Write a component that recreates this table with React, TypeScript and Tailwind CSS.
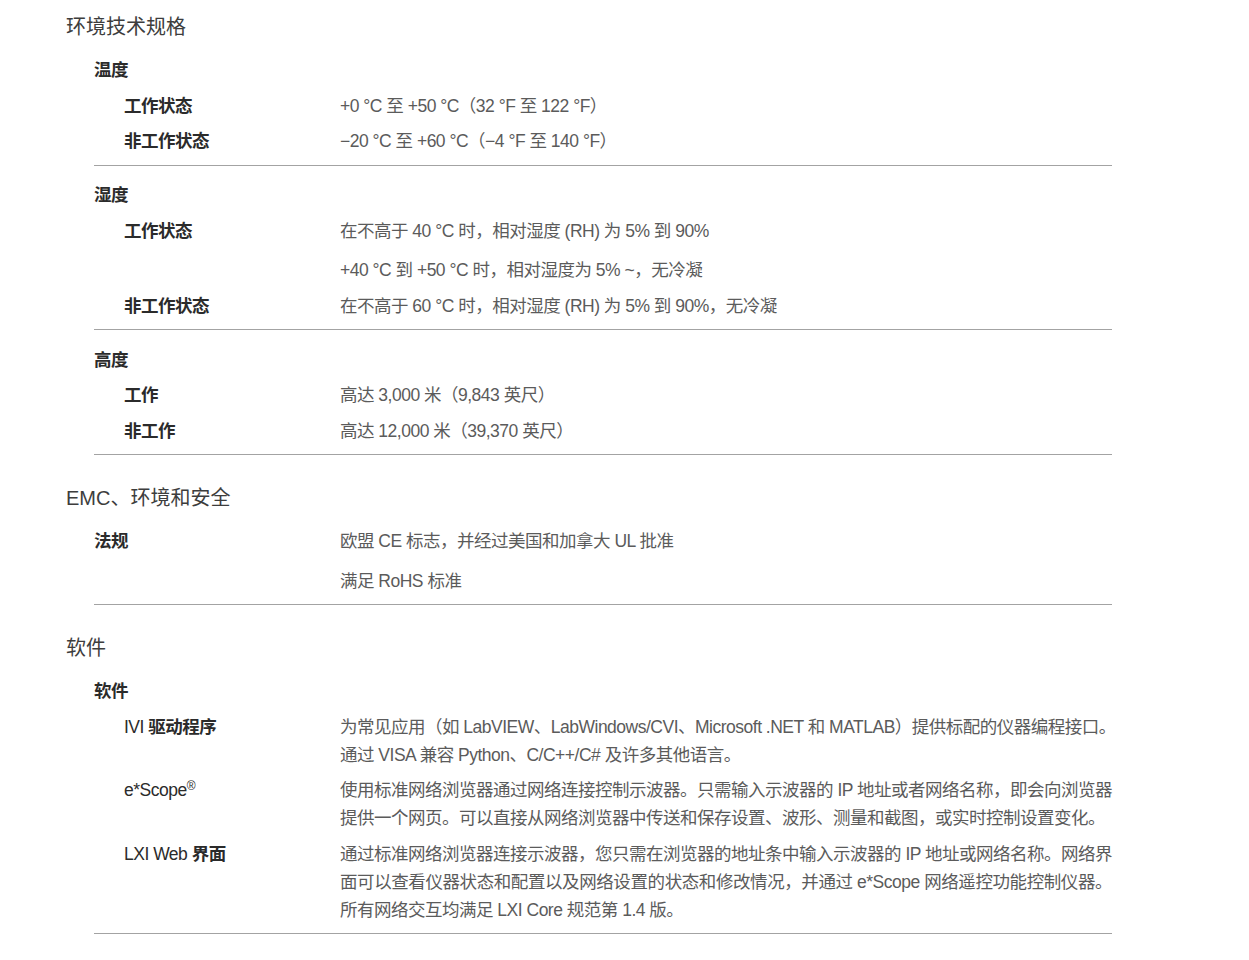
import type { ReactNode } from 'react'

type Row = { label: ReactNode; values: string[][] }
type Group = { name: string; values?: string[][]; rows: Row[] }
type Section = { title: string; groups: Group[] }

const sections: Section[] = [
  {
    title: '环境技术规格',
    groups: [
      {
        name: '温度',
        rows: [
          { label: '工作状态', values: [['+0 °C 至 +50 °C（32 °F 至 122 °F）']] },
          { label: '非工作状态', values: [['−20 °C 至 +60 °C（−4 °F 至 140 °F）']] },
        ],
      },
      {
        name: '湿度',
        rows: [
          {
            label: '工作状态',
            values: [['在不高于 40 °C 时，相对湿度 (RH) 为 5% 到 90%'], ['+40 °C 到 +50 °C 时，相对湿度为 5% ~，无冷凝']],
          },
          { label: '非工作状态', values: [['在不高于 60 °C 时，相对湿度 (RH) 为 5% 到 90%，无冷凝']] },
        ],
      },
      {
        name: '高度',
        rows: [
          { label: '工作', values: [['高达 3,000 米（9,843 英尺）']] },
          { label: '非工作', values: [['高达 12,000 米（39,370 英尺）']] },
        ],
      },
    ],
  },
  {
    title: 'EMC、环境和安全',
    groups: [
      {
        name: '法规',
        values: [['欧盟 CE 标志，并经过美国和加拿大 UL 批准'], ['满足 RoHS 标准']],
        rows: [],
      },
    ],
  },
  {
    title: '软件',
    groups: [
      {
        name: '软件',
        rows: [
          {
            label: (
              <>
                <span className="font-normal">IVI</span> 驱动程序
              </>
            ),
            values: [
              [
                '为常见应用（如 LabVIEW、LabWindows/CVI、Microsoft .NET 和 MATLAB）提供标配的仪器编程接口。',
                '通过 VISA 兼容 Python、C/C++/C# 及许多其他语言。',
              ],
            ],
          },
          {
            label: (
              <span className="font-normal">
                e*Scope<sup className="text-[12px] tracking-normal">®</sup>
              </span>
            ),
            values: [
              [
                '使用标准网络浏览器通过网络连接控制示波器。只需输入示波器的 IP 地址或者网络名称，即会向浏览器',
                '提供一个网页。可以直接从网络浏览器中传送和保存设置、波形、测量和截图，或实时控制设置变化。',
              ],
            ],
          },
          {
            label: (
              <>
                <span className="font-normal">LXI Web</span> 界面
              </>
            ),
            values: [
              [
                '通过标准网络浏览器连接示波器，您只需在浏览器的地址条中输入示波器的 IP 地址或网络名称。网络界',
                '面可以查看仪器状态和配置以及网络设置的状态和修改情况，并通过 e*Scope 网络遥控功能控制仪器。',
                '所有网络交互均满足 LXI Core 规范第 1.4 版。',
              ],
            ],
          },
        ],
      },
    ],
  },
]

function Values({ values }: { values: string[][] }) {
  return (
    <div className="flex flex-col gap-[11.5px] text-[#5b5b5b]">
      {values.map((para, i) => (
        <div key={i}>
          {para.map((line, j) => (
            <div
              key={j}
              className={j < para.length - 1 ? 'whitespace-nowrap text-justify [text-align-last:justify]' : 'whitespace-nowrap'}
            >
              {line}
            </div>
          ))}
        </div>
      ))}
    </div>
  )
}

function SpecGroup({ group, first }: { group: Group; first: boolean }) {
  return (
    <div className={`ml-[28px] w-[1018px] border-b border-[#a3a3a3] pb-[5.5px] ${first ? '' : 'pt-[12px]'}`}>
      <div className="grid grid-cols-[246px_1fr] py-[3.75px]">
        <div className="font-bold text-[#2b2b2b]">{group.name}</div>
        {group.values ? <Values values={group.values} /> : <div />}
      </div>
      {group.rows.map((row, i) => (
        <div key={i} className="grid grid-cols-[246px_1fr] py-[3.75px]">
          <div className="pl-[30px] font-bold text-[#2b2b2b]">{row.label}</div>
          <Values values={row.values} />
        </div>
      ))}
    </div>
  )
}

export default function App() {
  return (
    <div
      className="min-h-screen bg-white pl-[66px] pt-[12.5px] text-[17.5px] leading-[28px] tracking-[-0.5px]"
      style={{ fontFamily: '"Liberation Sans", "Noto Sans CJK SC", sans-serif' }}
    >
      {sections.map((section, si) => (
        <section key={section.title} className={si === 0 ? '' : 'mt-[28.5px]'}>
          <h2 className="mb-[12px] text-[20px] leading-[28px] tracking-normal text-[#3d3d3d]">{section.title}</h2>
          {section.groups.map((group, gi) => (
            <SpecGroup key={group.name} group={group} first={gi === 0} />
          ))}
        </section>
      ))}
    </div>
  )
}
